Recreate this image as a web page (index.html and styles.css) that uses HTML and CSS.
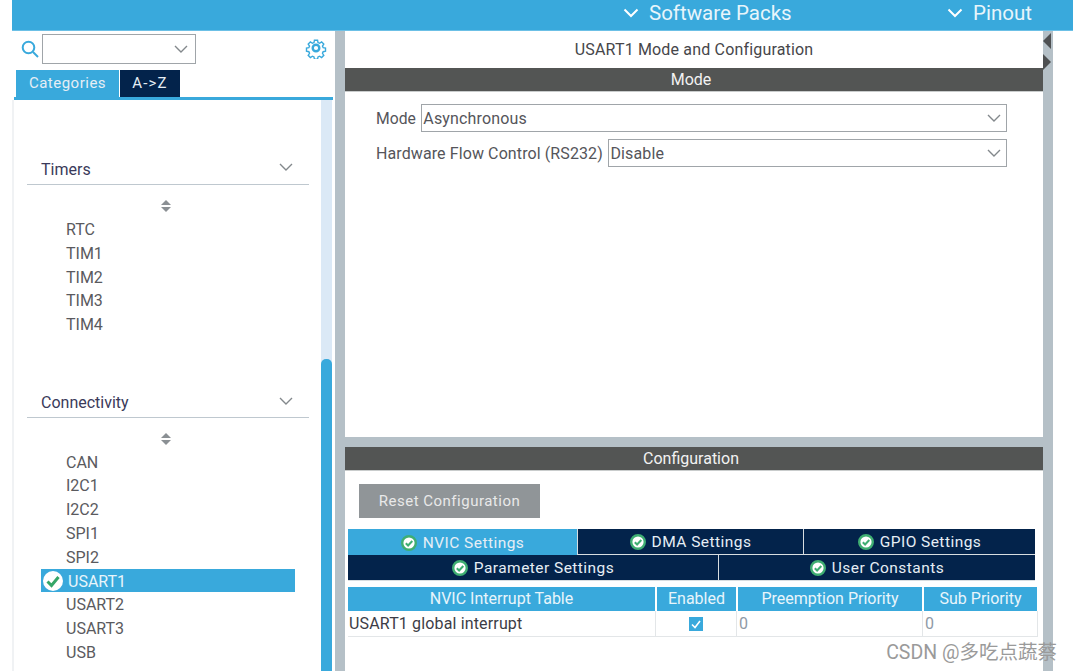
FILE: index.html
```html
<!DOCTYPE html>
<html lang="en">

<head>
    <meta charset="UTF-8">
    <meta name="viewport" content="width=device-width, initial-scale=1.0">
    <title>USART1 Mode and Configuration</title>
    <link rel="stylesheet" href="styles.css">
</head>

<body>
    <div class="app">
        <header class="topbar">
            <div class="top-item packs">
                <svg class="top-arrow" viewBox="0 0 16 10"><path d="M1.500 1.500 8 8l6.500-6.500"/></svg>
                <span>Software Packs</span>
            </div>
            <div class="top-item pinout">
                <svg class="top-arrow" viewBox="0 0 16 10"><path d="M1.500 1.500 8 8l6.500-6.500"/></svg>
                <span>Pinout</span>
            </div>
        </header>
        <div class="main">
            <aside class="sidebar">
                <div class="search-row">
                    <svg class="search-icon" viewBox="0 0 18 18"><circle cx="7.500" cy="7.500" r="5.800"/><path d="M12 12l5 5"/></svg>
                    <div class="search-box">
                        <svg class="chev" viewBox="0 0 14 8"><path d="M1 1l6 6 6-6"/></svg>
                    </div>
                    <svg class="gear" viewBox="0 0 24 24">
                        <path d="M10 2h4l.6 3 2 .9 2.600-1.700 2.800 2.800-1.700 2.600.9 2 3 .6v4l-3 .6-.9 2 1.700 2.600-2.800 2.800-2.600-1.700-2 .9-.6 3h-4l-.6-3-2-.9-2.600 1.700-2.800-2.800 1.700-2.600-.9-2-3-.6v-4l3-.6.9-2-1.700-2.600 2.800-2.800 2.600 1.700 2-.9z" transform="translate(1.800 1.800) scale(.85)"/>
                        <circle class="gear-hub" cx="12" cy="12" r="3.600"/>
                    </svg>
                </div>
                <div class="tabs">
                    <div class="tab tab-on">Categories</div>
                    <div class="tab tab-az">A-&gt;Z</div>
                </div>
                <div class="list-wrap">
                    <div class="list">
                        <div class="group-head first">
                            <span>Timers</span>
                            <svg class="chev" viewBox="0 0 14 8"><path d="M1 1l6 6 6-6"/></svg>
                        </div>
                        <div class="sorter"><i class="up"></i><i class="down"></i></div>
                        <ul class="items">
                            <li>RTC</li>
                            <li>TIM1</li>
                            <li>TIM2</li>
                            <li>TIM3</li>
                            <li>TIM4</li>
                        </ul>
                        <div class="group-head second">
                            <span>Connectivity</span>
                            <svg class="chev" viewBox="0 0 14 8"><path d="M1 1l6 6 6-6"/></svg>
                        </div>
                        <div class="sorter sorter-tight"><i class="up"></i><i class="down"></i></div>
                        <ul class="items">
                            <li>CAN</li>
                            <li>I2C1</li>
                            <li>I2C2</li>
                            <li>SPI1</li>
                            <li>SPI2</li>
                            <li class="selected">
                                <svg class="sel-check" viewBox="0 0 20 20"><circle cx="10" cy="10" r="10"/><path d="M4.500 10.500l4 4 7-8.500"/></svg>
                                USART1
                            </li>
                            <li>USART2</li>
                            <li>USART3</li>
                            <li>USB</li>
                        </ul>
                    </div>
                    <div class="scrollbar"><div class="thumb"></div></div>
                </div>
            </aside>
            <section class="content">
                <div class="mode-pane">
                    <div class="pane-title">USART1 Mode and Configuration</div>
                    <div class="section-bar">Mode</div>
                    <div class="form">
                        <div class="form-row">
                            <label class="label-mode">Mode</label>
                            <div class="select"><span>Asynchronous</span>
                                <svg class="chev" viewBox="0 0 14 8"><path d="M1 1l6 6 6-6"/></svg>
                            </div>
                        </div>
                        <div class="form-row">
                            <label class="label-flow">Hardware Flow Control (RS232)</label>
                            <div class="select"><span>Disable</span>
                                <svg class="chev" viewBox="0 0 14 8"><path d="M1 1l6 6 6-6"/></svg>
                            </div>
                        </div>
                    </div>
                </div>
                <div class="config-pane">
                    <div class="section-bar">Configuration</div>
                    <button class="reset">Reset Configuration</button>
                    <div class="settings">
                        <div class="set-row row-one">
                            <div class="set-tab set-on"><svg class="ok" viewBox="0 0 16 16"><circle cx="8" cy="8" r="6.800"/><path d="M4.800 8.200l2.300 2.300 4.200-4.500"/></svg>NVIC Settings</div>
                            <div class="set-tab"><svg class="ok" viewBox="0 0 16 16"><circle cx="8" cy="8" r="6.800"/><path d="M4.800 8.200l2.300 2.300 4.200-4.500"/></svg>DMA Settings</div>
                            <div class="set-tab"><svg class="ok" viewBox="0 0 16 16"><circle cx="8" cy="8" r="6.800"/><path d="M4.800 8.200l2.300 2.300 4.200-4.500"/></svg>GPIO Settings</div>
                        </div>
                        <div class="set-row row-two">
                            <div class="set-tab"><svg class="ok" viewBox="0 0 16 16"><circle cx="8" cy="8" r="6.800"/><path d="M4.800 8.200l2.300 2.300 4.200-4.500"/></svg>Parameter Settings</div>
                            <div class="set-tab"><svg class="ok" viewBox="0 0 16 16"><circle cx="8" cy="8" r="6.800"/><path d="M4.800 8.200l2.300 2.300 4.200-4.500"/></svg>User Constants</div>
                        </div>
                    </div>
                    <div class="nvic">
                        <div class="nvic-row nvic-head">
                            <div>NVIC Interrupt Table</div>
                            <div>Enabled</div>
                            <div>Preemption Priority</div>
                            <div>Sub Priority</div>
                        </div>
                        <div class="nvic-row nvic-body">
                            <div class="cell-name">USART1 global interrupt</div>
                            <div class="cell-check"><svg class="tick" viewBox="0 0 14 14"><rect width="14" height="14"/><path d="M3 7.500l3 3 5-6.500"/></svg></div>
                            <div class="cell-num">0</div>
                            <div class="cell-num">0</div>
                        </div>
                    </div>
                </div>
                <div class="collapse-arrows"><i class="left"></i><i class="right"></i></div>
            </section>
            <div class="right-edge"></div>
        </div>
    </div>
    <div class="watermark">CSDN @多吃点蔬蔡</div>
</body>

</html>
```

FILE: styles.css
```css
html, body {
    height: 100%;
}

body {
    margin: 0;
    background: #ffffff;
    color: #3c3c46;
    font-family: Roboto, 'Liberation Sans', 'Noto Sans CJK SC', sans-serif;
    overflow: hidden;
}

.app {
    margin-left: 12px;
    height: 671px;
    display: flex;
    flex-direction: column;
}

.topbar {
    height: 31px;
    flex: none;
    background: #39a9dc;
    display: flex;
    color: #e8f5fb;
    font-size: 20.500px;
    box-sizing: border-box;
    padding-left: 611px;
    border-bottom: 1px solid #6cc0e6;
}

.top-item {
    display: flex;
    align-items: center;
    height: 26px;
}

.packs {
    width: 324px;
}

.top-arrow {
    width: 16px;
    height: 10px;
    margin-right: 10px;
    fill: none;
    stroke: #ffffff;
    stroke-width: 2;
}

.main {
    flex: 1;
    display: flex;
    min-height: 0;
    background: #b5c0c7;
}

/* left panel */
.sidebar {
    width: 323px;
    flex: none;
    background: #ffffff;
    display: flex;
    flex-direction: column;
}

.search-row {
    height: 39px;
    flex: none;
    display: flex;
    align-items: flex-start;
}

.search-icon {
    width: 18px;
    height: 18px;
    margin: 9px 0 0 9px;
    fill: none;
    stroke: #39a9dc;
    stroke-width: 2;
}

.search-box {
    width: 154px;
    height: 30px;
    margin: 3px 0 0 3px;
    border: 1px solid #a0a5a9;
    display: flex;
    align-items: center;
    justify-content: flex-end;
    padding-right: 7px;
    box-sizing: border-box;
}

.chev {
    width: 14px;
    height: 8px;
    fill: none;
    stroke: #83888c;
    stroke-width: 1.400;
}

.gear {
    width: 22px;
    height: 22px;
    margin: 6px 0 0 109px;
    fill: none;
    stroke: #39a9dc;
    stroke-width: 1.800;
}

.gear-hub {
    stroke-width: 2.600;
}

.tabs {
    height: 30px;
    flex: none;
    display: flex;
    align-items: flex-start;
    padding-left: 2px;
    border-bottom: 3px solid #39a9dc;
    box-sizing: border-box;
    margin-left: 2px;
    margin-right: 2px;
}

.tab {
    height: 27px;
    line-height: 27px;
    background: #03234b;
    color: #e6eef5;
    font-size: 15px;
    letter-spacing: 0.500px;
    text-align: center;
    width: 60px;
}

.tab-az {
    letter-spacing: 1.200px;
}

.tab-on {
    background: #39a9dc;
    width: 103px;
    margin-right: 1px;
}

.list-wrap {
    flex: 1;
    display: flex;
    min-height: 0;
    border-left: 2px solid #f0f2f4;
    overflow: hidden;
}

.list {
    width: 307px;
    flex: none;
    box-sizing: border-box;
}

.scrollbar {
    width: 11px;
    background: #dbe9f6;
    display: flex;
    flex-direction: column;
    justify-content: flex-end;
}

.thumb {
    height: 312px;
    background: #39a9dc;
    border-radius: 5px 5px 0 0;
}

.group-head {
    margin-left: 13px;
    height: 27px;
    border-bottom: 1px solid #bfc8cf;
    display: flex;
    justify-content: space-between;
    align-items: center;
    color: #3a3a5a;
    font-size: 16px;
    padding: 0 16px 4px 14px;
    width: 282px;
    box-sizing: border-box;
}

.group-head.first {
    margin-top: 58px;
}

.group-head.second {
    margin-top: 55px;
    padding-bottom: 2px;
}

.group-head .chev {
    margin-top: -4px;
}

.sorter {
    height: 32px;
    padding-top: 15px;
    display: flex;
    flex-direction: column;
    align-items: center;
    gap: 2px;
    width: 303px;
    box-sizing: border-box;
}

.sorter-tight {
    height: 31.600px;
}

.sorter i {
    width: 0;
    height: 0;
    border-left: 5px solid transparent;
    border-right: 5px solid transparent;
}

.sorter .up {
    border-bottom: 5px solid #8b9094;
}

.sorter .down {
    border-top: 5px solid #8b9094;
}

.items {
    list-style: none;
    margin: 0;
    padding: 0;
    font-size: 16px;
    color: #5a5a5e;
}

.items li {
    height: 23.800px;
    line-height: 26px;
    padding-left: 52px;
}

.items .selected {
    margin-left: 27px;
    width: 254px;
    padding-left: 27px;
    box-sizing: border-box;
    background: #39a9dc;
    color: #e8f5fb;
    position: relative;
}

.sel-check {
    position: absolute;
    left: 2px;
    top: 2px;
    width: 20px;
    height: 20px;
    fill: #ffffff;
    stroke: none;
}

.sel-check path {
    fill: none;
    stroke: #35a668;
    stroke-width: 3;
}

/* center */
.content {
    margin-left: 10px;
    width: 698px;
    flex: none;
    display: flex;
    flex-direction: column;
    position: relative;
}

.mode-pane {
    height: 406px;
    flex: none;
    background: #ffffff;
}

.pane-title {
    height: 37px;
    line-height: 37px;
    text-align: center;
    font-size: 16px;
    letter-spacing: 0.170px;
    color: #46464a;
}

.section-bar {
    height: 23px;
    line-height: 23px;
    background: #535554;
    color: #f2f2f2;
    text-align: center;
    font-size: 16px;
    border-bottom: 1px solid #c9cccc;
    padding-right: 6px;
}

.form {
    padding: 12px 36px 0 31px;
    display: flex;
    flex-direction: column;
    gap: 7px;
}

.form-row {
    display: flex;
    align-items: center;
    font-size: 16px;
    color: #55555a;
}

.form-row label {
    white-space: nowrap;
}

.label-mode {
    margin-right: 5px;
    font-size: 15.700px;
}

.label-flow {
    margin-right: 5px;
    letter-spacing: 0.100px;
}

.select {
    flex: 1;
    height: 28px;
    border: 1px solid #a0a5a9;
    box-sizing: border-box;
    padding: 0 5px 0 1.500px;
    display: flex;
    justify-content: space-between;
    align-items: center;
    letter-spacing: 0.150px;
}

.config-pane {
    margin-top: 10px;
    flex: 1;
    background: #ffffff;
    display: flex;
    flex-direction: column;
}

.reset {
    align-self: flex-start;
    width: 181px;
    height: 34px;
    margin: 13px 0 0 14px;
    border: 0;
    background: #909598;
    color: #e9e9e9;
    font-family: inherit;
    font-size: 15px;
    letter-spacing: 0.500px;
}

.settings {
    margin: 11px 8px 0 3px;
    display: flex;
    flex-direction: column;
}

.set-row {
    display: flex;
}

.set-tab {
    background: #03234b;
    color: #e6eef5;
    font-size: 15.500px;
    letter-spacing: 0.450px;
    display: flex;
    align-items: center;
    justify-content: center;
    box-sizing: border-box;
    border-left: 1px solid #d8dde0;
    border-bottom: 1px solid #d8dde0;
    height: 26px;
}

.set-tab:first-child {
    border-left: 0;
}

.row-one .set-tab {
    width: 226px;
    padding-top: 1px;
}

.row-one .set-tab:last-child {
    width: 232px;
}

.row-one .set-tab:first-child {
    width: 229px;
    border-bottom: 0;
}

.row-two .set-tab {
    width: 317px;
}

.row-two .set-tab:first-child {
    width: 370px;
}

.set-on {
    background: #39a9dc;
}

.ok {
    width: 16px;
    height: 16px;
    margin-right: 6px;
}

.ok circle {
    fill: #ffffff;
    stroke: #3fae72;
    stroke-width: 2.400;
}

.ok path {
    fill: none;
    stroke: #3fae72;
    stroke-width: 2;
}

.nvic {
    margin: 6px 0 0 3px;
    width: 690px;
    font-size: 16px;
}

.nvic-row {
    display: flex;
}

.nvic-head {
    gap: 2px;
}

.nvic-head > div {
    height: 24px;
    line-height: 24px;
    background: #39a9dc;
    color: #e8f5fb;
    text-align: center;
}

.nvic-head > div:nth-child(1) {
    width: 307px;
}

.nvic-head > div:nth-child(2) {
    width: 79px;
}

.nvic-head > div:nth-child(3) {
    width: 184px;
}

.nvic-head > div:nth-child(4) {
    width: 113px;
}

.nvic-body {
    border-bottom: 1px solid #e3e6e8;
    height: 25px;
}

.nvic-body > div {
    line-height: 25px;
    border-right: 1px solid #e3e6e8;
    box-sizing: border-box;
}

.cell-name {
    width: 308px;
    color: #3c3c46;
    letter-spacing: 0.150px;
    padding-left: 1px;
}

.cell-check {
    width: 81px;
    display: flex;
    justify-content: center;
    align-items: center;
}

.tick {
    width: 14px;
    height: 14px;
}

.tick rect {
    fill: #39a9dc;
}

.tick path {
    fill: none;
    stroke: #ffffff;
    stroke-width: 1.600;
}

.cell-num {
    width: 186px;
    color: #8f9aa6;
    padding-left: 2px;
}

.cell-num:last-child {
    width: 115px;
}

.collapse-arrows {
    position: absolute;
    right: -10px;
    top: 2px;
    width: 10px;
    display: flex;
    flex-direction: column;
    gap: 5px;
}

.collapse-arrows i {
    width: 0;
    height: 0;
    border-top: 8px solid transparent;
    border-bottom: 8px solid transparent;
}

.collapse-arrows .left {
    border-right: 8px solid #4e5052;
}

.collapse-arrows .right {
    border-left: 8px solid #4e5052;
}

.right-edge {
    margin-left: 10px;
    flex: 1;
    background: #ffffff;
}

.watermark {
    position: absolute;
    right: 16px;
    top: 636px;
    color: #9a9a9a;
    font-size: 19.500px;
}
```
